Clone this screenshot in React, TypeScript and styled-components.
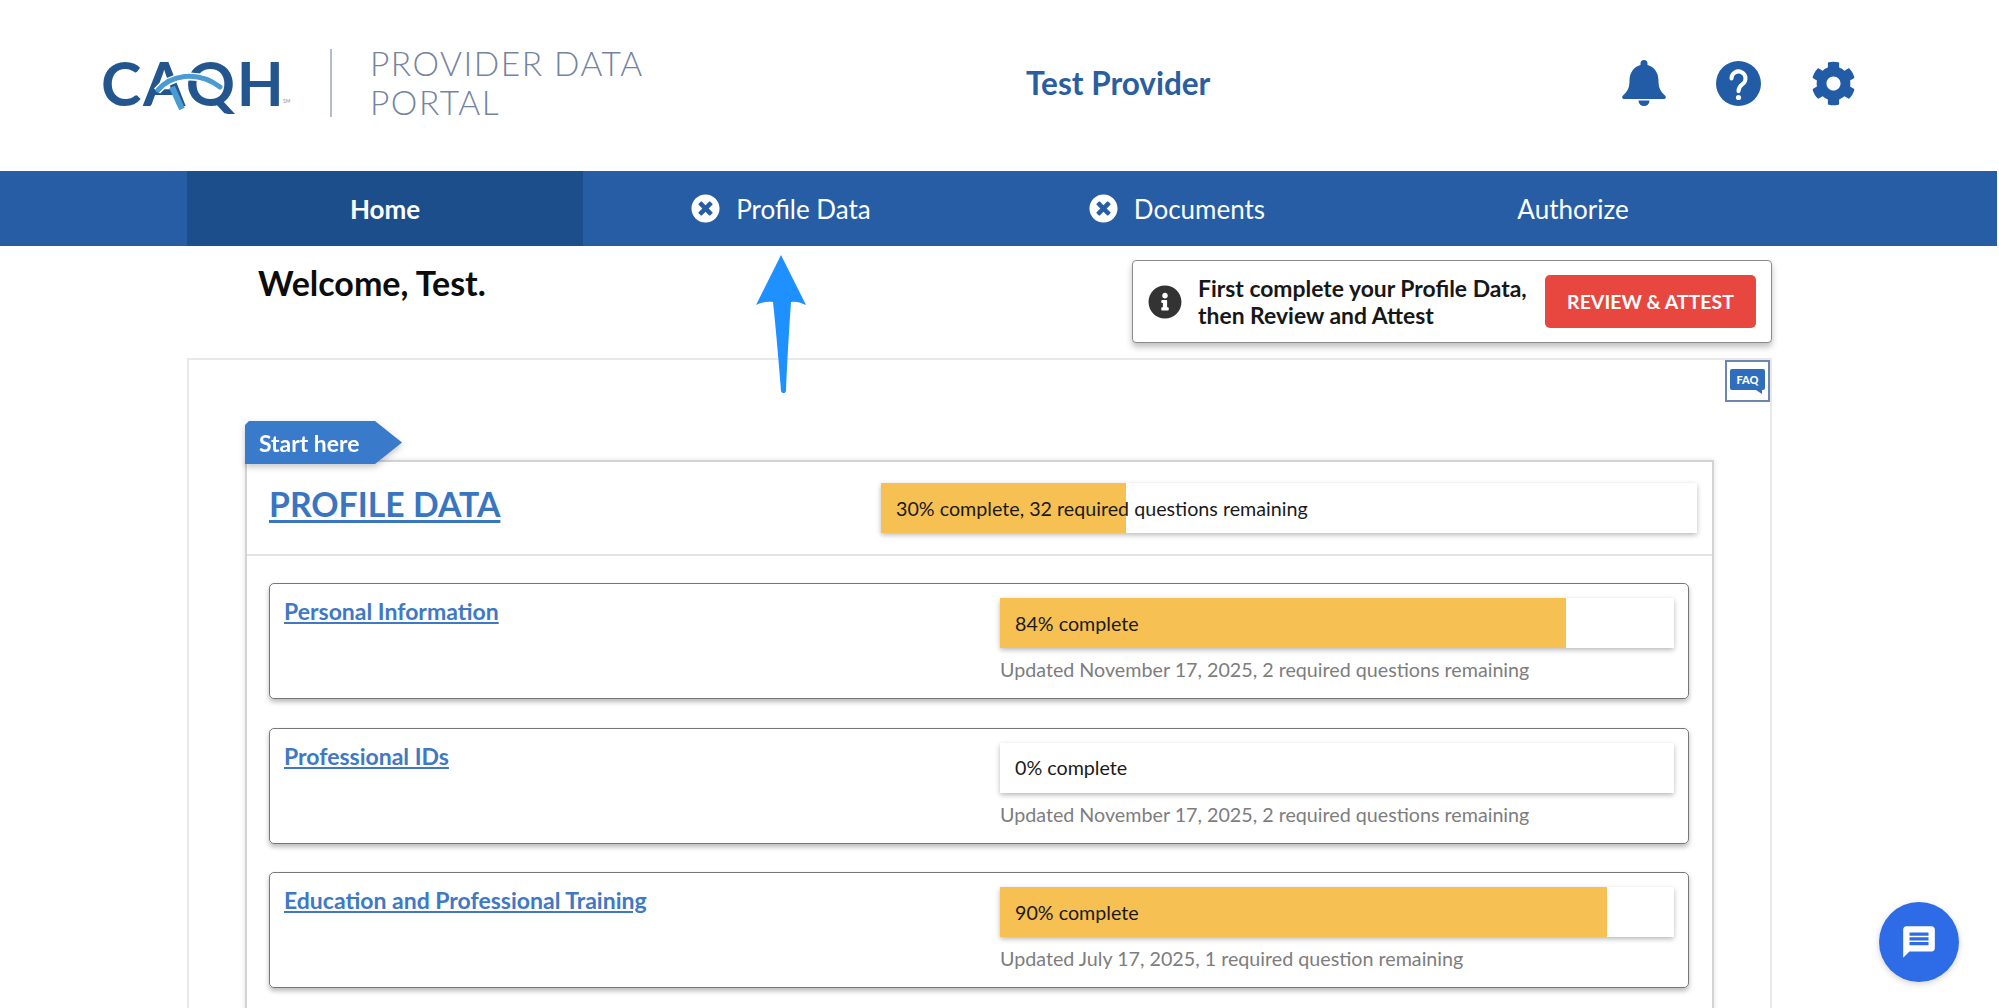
import React from "react";
import styled, { createGlobalStyle } from "styled-components";
import { FaCog, FaInfoCircle, FaTimesCircle } from "react-icons/fa";
import { MdMessage } from "react-icons/md";

const Global = createGlobalStyle`
  html, body { margin: 0; padding: 0; background: #fff; }
  * { box-sizing: border-box; }
  body { font-family: Lato, "Open Sans", sans-serif; color: #111; }
`;

const Page = styled.div`
  position: relative;
  width: 1999px;
  height: 1008px;
  overflow: hidden;
  background: #fff;
`;

const Header = styled.header`
  display: grid;
  grid-template-columns: 923px 1fr auto;
  align-items: center;
  height: 171px;
  padding: 0 143px 5px 103px;
`;

const Brand = styled.div`
  display: flex;
  align-items: center;
`;

const LogoMark = styled.div`
  position: relative;
  width: 174px;
  height: 68px;
  margin: 0 55px 0 -2px;
  display: flex;
  align-items: center;
`;

const LogoText = styled.span`
  font-size: 61px;
  line-height: 68px;
  font-weight: 700;
  letter-spacing: 1.7px;
  color: #23568f;
  white-space: nowrap;
`;

const LogoSm = styled.span`
  position: absolute;
  left: 182px;
  top: 49px;
  font-size: 5px;
  color: #7f8fa9;
`;

const Swoosh = styled.svg`
  position: absolute;
  left: 0;
  top: 0;
`;

const Divider = styled.div`
  width: 2px;
  height: 68px;
  background: #b4bccb;
  margin-right: 38px;
`;

const PortalName = styled.div`
  font-size: 33.5px;
  line-height: 39.5px;
  font-weight: 300;
  letter-spacing: 1.5px;
  color: #74849f;
`;

const UserName = styled.div`
  font-size: 31.5px;
  font-weight: 700;
  color: #2a5e9f;
`;

const HeaderIcons = styled.div`
  display: flex;
  align-items: center;
  gap: 50px;
  color: #235ca6;
  font-size: 45px;
  line-height: 0;
`;

const Nav = styled.nav`
  display: flex;
  height: 75px;
  margin-right: 2px;
  padding-left: 187px;
  background: #265da5;
`;

const Tab = styled.div<{ $active?: boolean }>`
  width: 396px;
  display: flex;
  align-items: center;
  justify-content: center;
  gap: 16px;
  font-size: 26px;
  font-weight: ${(p) => (p.$active ? 700 : 400)};
  color: #fff;
  background: ${(p) => (p.$active ? "#1b4e8b" : "transparent")};
  svg { font-size: 29px; }
`;

const Container = styled.main`
  width: 1585px;
  margin-left: 187px;
`;

const TopRow = styled.div`
  display: flex;
  justify-content: space-between;
  align-items: flex-start;
  height: 112px;
  padding: 15px 0 0 71px;
`;

const Welcome = styled.h1`
  margin: 0;
  font-size: 34px;
  line-height: 44px;
  font-weight: 700;
  color: #0c0c0c;
`;

const Notice = styled.div`
  display: flex;
  align-items: center;
  width: 640px;
  height: 83px;
  margin-top: -1px;
  padding: 0 15px 0 15px;
  background: #fff;
  border: 1.5px solid #8b8b8b;
  border-radius: 4px;
  box-shadow: 0 4px 6px rgba(0, 0, 0, 0.25);
  svg { font-size: 34px; color: #333; flex: none; margin-right: 16px; }
`;

const NoticeText = styled.div`
  flex: 1;
  font-size: 22.9px;
  line-height: 27px;
  font-weight: 700;
  white-space: nowrap;
  color: #171717;
`;

const AttestButton = styled.button`
  width: 211px;
  height: 53px;
  flex: none;
  border: 0;
  border-radius: 5px;
  background: #e8473f;
  color: #fff;
  font-family: inherit;
  font-size: 19.5px;
  font-weight: 700;
`;

const Panel = styled.section`
  height: 650px;
  border: 2px solid #e8e8e8;
  border-bottom: 0;
  padding: 0 56px;
`;

const FaqRow = styled.div`
  display: flex;
  justify-content: flex-end;
  margin-right: -56px;
  height: 42px;
`;

const FaqButton = styled.div`
  width: 45px;
  height: 42px;
  border: 2px solid #6c87ab;
  display: flex;
  align-items: center;
  justify-content: center;
  padding-bottom: 3px;
`;

const FaqBubble = styled.div`
  position: relative;
  width: 35px;
  height: 21px;
  border-radius: 2px;
  background: #2f6dbd;
  color: #fff;
  font-size: 11px;
  font-weight: 900;
  line-height: 21px;
  text-align: center;
  &::after {
    content: "";
    position: absolute;
    right: 3px;
    bottom: -4px;
    border-left: 6px solid transparent;
    border-top: 4px solid #2f6dbd;
  }
`;

const StartTagShadow = styled.div`
  position: relative;
  z-index: 1;
  width: 157px;
  margin: 19px 0 -4px;
  filter: drop-shadow(0 3px 3px rgba(0, 0, 0, 0.22));
`;

const StartTag = styled.div`
  height: 43px;
  padding-left: 14px;
  background: #3a7acb;
  clip-path: polygon(0 4px, 4px 0, 130px 0, 157px 50%, 130px 100%, 0 100%);
  color: #fff;
  font-size: 22.9px;
  font-weight: 700;
  line-height: 45px;
`;

const Card = styled.div`
  height: 800px;
  border: 2px solid #d3d3d3;
  border-bottom: 0;
  box-shadow: 0 0 5px rgba(0, 0, 0, 0.12);
  background: #fff;
`;

const CardHead = styled.div`
  display: flex;
  align-items: center;
  justify-content: space-between;
  height: 94px;
  padding: 0 15px 0 22px;
  border-bottom: 2px solid #e3e3e3;
`;

const CardTitle = styled.a`
  margin-bottom: 8px;
  font-size: 33.8px;
  font-weight: 700;
  color: #3a76c0;
  text-decoration: underline;
  text-underline-offset: 3px;
`;

const Bar = styled.div<{ $pct: number; $width: number }>`
  display: flex;
  align-items: center;
  width: ${(p) => p.$width}px;
  height: 50px;
  padding-left: 15px;
  font-size: 19.7px;
  color: #1a1a1a;
  background: linear-gradient(to right, #f6c052 ${(p) => p.$pct}%, #fff ${(p) => p.$pct}%);
  box-shadow: 0 2px 5px rgba(0, 0, 0, 0.28);
`;

const RowList = styled.div`
  display: flex;
  flex-direction: column;
  gap: 28.5px;
  padding: 27px 23px 27px 22px;
`;

const Row = styled.article`
  display: flex;
  justify-content: space-between;
  height: 116px;
  padding: 14px 14px 0 14px;
  border: 1.5px solid #777;
  border-radius: 5px;
  box-shadow: 0 3px 5px rgba(0, 0, 0, 0.28);
`;

const RowTitle = styled.a`
  margin-top: -2px;
  font-size: 23px;
  line-height: 30px;
  font-weight: 700;
  color: #3f78c4;
  text-decoration: underline;
  text-underline-offset: 2px;
  height: 30px;
`;

const RowStatus = styled.div`
  width: 674px;
`;

const Updated = styled.div`
  margin-top: 9px;
  font-size: 19.7px;
  line-height: 26px;
  color: #7d7d7d;
`;

const Arrow = styled.svg`
  position: absolute;
  left: 756px;
  top: 255px;
`;

const ChatButton = styled.div`
  position: absolute;
  right: 40px;
  bottom: 26px;
  width: 80px;
  height: 80px;
  border-radius: 50%;
  background: #2e6be6;
  box-shadow: 0 2px 6px rgba(0, 0, 0, 0.18);
  color: #fff;
  display: flex;
  align-items: center;
  justify-content: center;
  font-size: 38px;
`;

const BellIcon = () => (
  <svg width="44" height="46" viewBox="0 0 44 46">
    <path
      fill="currentColor"
      d="M22 0 a3.5 3.5 0 0 1 3.5 3.5 v1.5 C33 7 36.5 13.5 36.5 21 c0 8 3 11 6.5 14.5 c1.6 1.6 .6 3.5 -1.2 3.5 H2.2 c-1.8 0 -2.8 -1.9 -1.2 -3.5 C4.500 32 7.500 29 7.500 21 C7.500 13.500 11 7 18.500 5 v-1.500 A3.500 3.500 0 0 1 22 0 Z"
    />
    <path fill="currentColor" d="M16.500 40.500 h11 a5.500 5.500 0 0 1 -11 0 Z" />
  </svg>
);

const HelpIcon = () => (
  <svg width="45" height="45" viewBox="0 0 45 45">
    <circle cx="22.5" cy="22.5" r="22.5" fill="currentColor" />
    <path
      d="M15.500 17.500 a7 7 0 1 1 11 5.700 c-2.800 2 -4 3.300 -4 7"
      fill="none"
      stroke="#fff"
      strokeWidth="4"
      strokeLinecap="round"
    />
    <circle cx="22.500" cy="36.500" r="2.600" fill="#fff" />
  </svg>
);

const rows = [
  { title: "Personal Information", pct: 84, note: "Updated November 17, 2025, 2 required questions remaining" },
  { title: "Professional IDs", pct: 0, note: "Updated November 17, 2025, 2 required questions remaining" },
  { title: "Education and Professional Training", pct: 90, note: "Updated July 17, 2025, 1 required question remaining" },
];

export default function App() {
  return (
    <Page>
      <Global />
      <Header>
        <Brand>
          <LogoMark>
            <LogoText>CAQH</LogoText>
            <LogoSm>SM</LogoSm>
            <Swoosh width="174" height="68" viewBox="0 0 174 68" fill="none">
              <path d="M56 42 C 68 28, 94 20, 120 38" stroke="#fff" strokeWidth="8" />
              <path d="M57 41 C 69 27, 95 20, 119 38" stroke="#4a9bd4" strokeWidth="5" strokeLinecap="round" />
              <path d="M71 38 L81 60" stroke="#4a9bd4" strokeWidth="6" />
            </Swoosh>
          </LogoMark>
          <Divider />
          <PortalName>
            PROVIDER DATA
            <br />
            PORTAL
          </PortalName>
        </Brand>
        <UserName>Test Provider</UserName>
        <HeaderIcons>
          <BellIcon />
          <HelpIcon />
          <FaCog />
        </HeaderIcons>
      </Header>
      <Nav>
        <Tab $active>Home</Tab>
        <Tab>
          <FaTimesCircle />
          Profile Data
        </Tab>
        <Tab>
          <FaTimesCircle />
          Documents
        </Tab>
        <Tab>Authorize</Tab>
      </Nav>
      <Container>
        <TopRow>
          <Welcome>Welcome, Test.</Welcome>
          <Notice>
            <FaInfoCircle />
            <NoticeText>
              First complete your Profile Data,
              <br />
              then Review and Attest
            </NoticeText>
            <AttestButton>REVIEW &amp; ATTEST</AttestButton>
          </Notice>
        </TopRow>
        <Panel>
          <FaqRow>
            <FaqButton>
              <FaqBubble>FAQ</FaqBubble>
            </FaqButton>
          </FaqRow>
          <StartTagShadow>
            <StartTag>Start here</StartTag>
          </StartTagShadow>
          <Card>
            <CardHead>
              <CardTitle>PROFILE DATA</CardTitle>
              <Bar $pct={30} $width={816}>30% complete, 32 required questions remaining</Bar>
            </CardHead>
            <RowList>
              {rows.map((r) => (
                <Row key={r.title}>
                  <RowTitle>{r.title}</RowTitle>
                  <RowStatus>
                    <Bar $pct={r.pct} $width={674}>{r.pct}% complete</Bar>
                    <Updated>{r.note}</Updated>
                  </RowStatus>
                </Row>
              ))}
            </RowList>
          </Card>
        </Panel>
      </Container>
      <Arrow width="50" height="138" viewBox="0 0 50 138">
        <path
          d="M25 0 L50 50 C 44 47 39 46 35 47 C 33 75 31 110 30 136 C 29 139 26 139 25 136 C 23 110 20 75 17 47 C 12 46 6 47 0 50 Z"
          fill="#1e90ff"
        />
      </Arrow>
      <ChatButton>
        <MdMessage />
      </ChatButton>
    </Page>
  );
}
